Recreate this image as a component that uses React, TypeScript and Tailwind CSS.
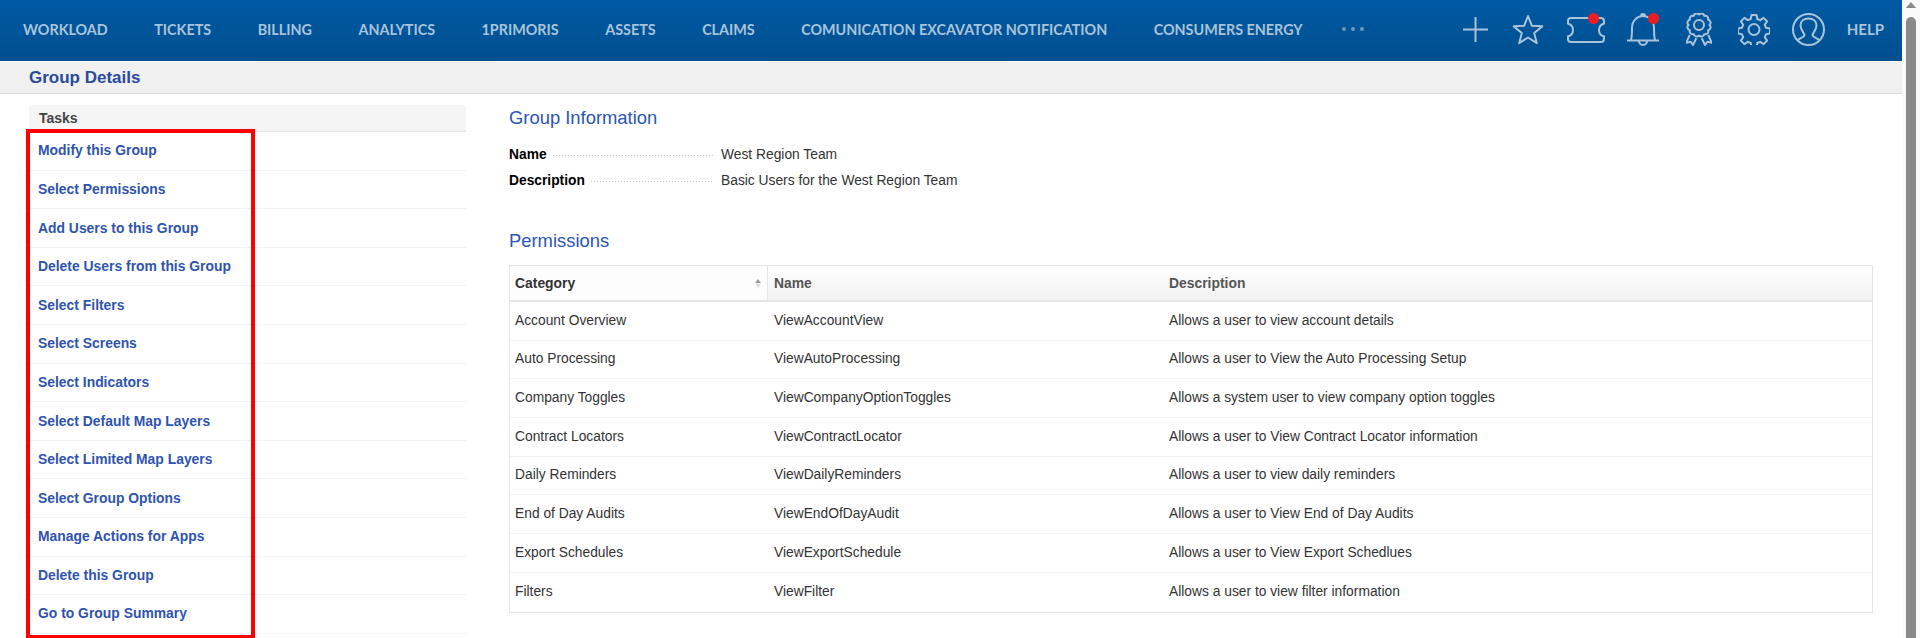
const navItems = [
  "WORKLOAD",
  "TICKETS",
  "BILLING",
  "ANALYTICS",
  "1PRIMORIS",
  "ASSETS",
  "CLAIMS",
  "COMUNICATION EXCAVATOR NOTIFICATION",
  "CONSUMERS ENERGY",
]

const tasks = [
  "Modify this Group",
  "Select Permissions",
  "Add Users to this Group",
  "Delete Users from this Group",
  "Select Filters",
  "Select Screens",
  "Select Indicators",
  "Select Default Map Layers",
  "Select Limited Map Layers",
  "Select Group Options",
  "Manage Actions for Apps",
  "Delete this Group",
  "Go to Group Summary",
]

const permissions = [
  ["Account Overview", "ViewAccountView", "Allows a user to view account details"],
  ["Auto Processing", "ViewAutoProcessing", "Allows a user to View the Auto Processing Setup"],
  ["Company Toggles", "ViewCompanyOptionToggles", "Allows a system user to view company option toggles"],
  ["Contract Locators", "ViewContractLocator", "Allows a user to View Contract Locator information"],
  ["Daily Reminders", "ViewDailyReminders", "Allows a user to view daily reminders"],
  ["End of Day Audits", "ViewEndOfDayAudit", "Allows a user to View End of Day Audits"],
  ["Export Schedules", "ViewExportSchedule", "Allows a user to View Export Schedlues"],
  ["Filters", "ViewFilter", "Allows a user to view filter information"],
]

function HeaderIcons() {
  return (
    <div className="flex items-center text-[#a9c3da]">
      {/* plus */}
      <svg width="25" height="25" viewBox="0 0 25 25" fill="none" stroke="currentColor" strokeWidth="2">
        <path d="M12.500 0v25M0 12.500h25" />
      </svg>
      {/* star */}
      <svg width="32" height="31" viewBox="0 0 32 31" fill="none" stroke="currentColor" strokeWidth="2" strokeLinejoin="round" className="ml-[24px]">
        <path d="M16 2l3.820 9.740 10.450.62-8.090 6.650 2.640 10.130L16 23.500l-8.820 5.640 2.640-10.130-8.090-6.650 10.450-.62z" />
      </svg>
      {/* ticket */}
      <div className="relative ml-[23px]">
        <svg width="38" height="26" viewBox="0 0 38 26" fill="none" stroke="currentColor" strokeWidth="2" className="block">
          <path d="M4 1h30a3 3 0 0 1 3 3v2.500c-3 1-5 3.500-5 6.500s2 5.500 5 6.500V22a3 3 0 0 1-3 3H4a3 3 0 0 1-3-3v-2.500c3-1 5-3.500 5-6.500s-2-5.500-5-6.500V4a3 3 0 0 1 3-3z" />
        </svg>
        <span className="absolute right-[6px] top-[-4px] size-[11px] rounded-full bg-[#ed1c24]" />
      </div>
      {/* bell */}
      <div className="relative ml-[22px]">
        <svg width="32" height="33" viewBox="0 0 32 33" fill="none" stroke="currentColor" strokeWidth="2" className="block">
          <path d="M4 27c1-3 1-7 1-12C5 8 10 3 16 3s11 5 11 12c0 5 0 9 1 12M0 27.500h32M12 28a4 4 0 0 0 8 0M14 3a2 2 0 0 1 4 0" />
        </svg>
        <span className="absolute right-0 top-0 size-[11px] rounded-full bg-[#ed1c24]" />
      </div>
      {/* award */}
      <svg width="26" height="33" viewBox="0 0 26 33" fill="none" stroke="currentColor" strokeWidth="2" strokeLinejoin="round" className="ml-[27px]">
        <path d="M23.500 12a3 3 0 0 1-1.410 5.250 3 3 0 0 1-3.840 3.840A3 3 0 0 1 13 22.500a3 3 0 0 1-5.250-1.410 3 3 0 0 1-3.840-3.840A3 3 0 0 1 2.500 12a3 3 0 0 1 1.410-5.250 3 3 0 0 1 3.840-3.840A3 3 0 0 1 13 1.500a3 3 0 0 1 5.250 1.410 3 3 0 0 1 3.840 3.840A3 3 0 0 1 23.500 12z" />
        <circle cx="13" cy="12" r="5" />
        <path d="M3.700 22L.3 29.700l4.400-1L7 32l3.300-6.700M22.300 22l3.400 7.700-4.400-1L19 32l-3.300-6.700" />
      </svg>
      {/* gear */}
      <svg width="32" height="31" viewBox="0 0.500 32 31" fill="none" stroke="currentColor" strokeWidth="2" strokeLinejoin="round" className="ml-[26px]">
        <path d="M13.500 1.500h5l.8 4 2.900 1.200 3.400-2.300 3.500 3.500-2.300 3.400 1.200 2.900 4 .8v5l-4 .8-1.200 2.900 2.300 3.400-3.500 3.500-3.400-2.300-2.900 1.200-.8 4h-5l-.8-4-2.900-1.200-3.400 2.300-3.500-3.500 2.300-3.400-1.200-2.900-4-.8v-5l4-.8 1.200-2.900-2.300-3.400 3.500-3.500 3.400 2.300 2.900-1.200z" />
        <circle cx="16" cy="16" r="5.500" />
      </svg>
      {/* user */}
      <svg width="33" height="33" viewBox="0 0 33 33" fill="none" stroke="currentColor" strokeWidth="2" className="ml-[22px]">
        <circle cx="16.500" cy="16.500" r="15.500" />
        <path d="M5.500 27.500C7 25 12 25 12.500 22c0-1.500-4-5-4-9.500C8.500 8 12 5.500 16.500 5.500s8 2.500 8 7c0 4.500-4 8-4 9.500.5 3 5.500 3 7 5.500" />
      </svg>
      <span className="ml-[22px] font-['Lato',sans-serif] text-[15px] font-bold">HELP</span>
    </div>
  )
}

function Leader() {
  return <span className="ml-[6px] mr-[8px] h-px flex-1 bg-[repeating-linear-gradient(90deg,#c8c8c8_0,#c8c8c8_1px,transparent_1px,transparent_3px)]" />
}

export default function App() {
  return (
    <div className="flex h-[638px] overflow-hidden bg-white font-['Liberation_Sans',sans-serif]">
      <div className="min-w-0 flex-1">
        {/* Top nav */}
        <header className="flex h-[61px] items-center justify-between bg-gradient-to-b from-[#005aa3] to-[#004f8f] pb-[2px] pl-[23px] pr-[18px]">
          <nav className="flex items-center gap-[46.500px] font-['Lato',sans-serif] text-[14.350px] font-bold text-[#a9c3da]">
            {navItems.map((item) => (
              <span key={item} className="whitespace-nowrap">{item}</span>
            ))}
            <span className="-ml-[7px] flex gap-[5px]">
              <span className="size-[4px] rounded-full bg-[#6f97bc]" />
              <span className="size-[4px] rounded-full bg-[#6f97bc]" />
              <span className="size-[4px] rounded-full bg-[#6f97bc]" />
            </span>
          </nav>
          <HeaderIcons />
        </header>

        {/* Page title */}
        <div className="mt-px flex h-[32px] items-center border-b border-[#dcdcdc] bg-[#f0f0f0] pl-[29px] text-[17px] font-bold text-[#2b4a9e]">
          Group Details
        </div>

        <div className="flex pl-[29px] pr-[29px] pt-[11px]">
          {/* Tasks */}
          <aside className="relative w-[437px] shrink-0">
            <div className="flex h-[27px] items-center rounded-t-[3px] border-b border-[#e6e6e6] bg-[#f5f5f5] pl-[10px] text-[14px] font-bold text-[#444]">
              Tasks
            </div>
            {tasks.map((task) => (
              <div key={task} className="flex h-[38.600px] items-center border-b border-[#f3f3f3] pl-[9px] text-[13.900px] font-bold text-[#2f54ae]">
                {task}
              </div>
            ))}
            <div className="absolute left-[-3px] top-[24px] h-[510px] w-[229px] border-4 border-[#ff0000]" />
          </aside>

          {/* Details */}
          <main className="ml-[43px] min-w-0 flex-1">
            <h2 className="text-[18.400px] leading-[26px] text-[#2a56b4]">Group Information</h2>
            <dl className="mt-[11px] text-[13.800px] text-[#333]">
              <div className="flex h-[26px] items-center">
                <dt className="flex w-[212px] items-center font-bold text-black">
                  Name
                  <Leader />
                </dt>
                <dd>West Region Team</dd>
              </div>
              <div className="flex h-[26px] items-center">
                <dt className="flex w-[212px] items-center font-bold text-black">
                  Description
                  <Leader />
                </dt>
                <dd>Basic Users for the West Region Team</dd>
              </div>
            </dl>
            <h2 className="mt-[34px] text-[18.400px] leading-[26px] text-[#2a56b4]">Permissions</h2>

            <div className="mt-[11px] border border-[#e6e6e6]">
              <div className="flex h-[36px] border-b-2 border-[#e6e6e6] bg-gradient-to-b from-white to-[#f2f2f2] text-[13.900px] font-bold text-[#555]">
                <div className="flex w-[258px] items-center justify-between border-r border-[#e6e6e6] bg-[#fdfdfd] pl-[5px] pr-[6px] text-[#333]">
                  Category
                  <span className="flex flex-col gap-px">
                    <span className="size-0 border-x-[3px] border-b-[4px] border-x-transparent border-b-[#999]" />
                    <span className="size-0 border-x-[3px] border-t-[4px] border-x-transparent border-t-[#ddd]" />
                  </span>
                </div>
                <div className="flex w-[395px] items-center pl-[6px]">Name</div>
                <div className="flex items-center pl-[6px]">Description</div>
              </div>
              {permissions.map(([category, name, description]) => (
                <div key={name} className="flex h-[38.700px] items-center border-b border-[#f3f3f3] text-[13.800px] text-[#333] last:border-b-0">
                  <div className="w-[258px] pl-[5px]">{category}</div>
                  <div className="w-[395px] pl-[6px]">{name}</div>
                  <div className="pl-[6px]">{description}</div>
                </div>
              ))}
            </div>
          </main>
        </div>
      </div>

      {/* Scrollbar */}
      <div className="flex w-[18px] shrink-0 flex-col items-center bg-[#fafafa]">
        <span className="mt-[2px] size-0 border-x-[5px] border-b-[6px] border-x-transparent border-b-[#8a8a8a]" />
        <div className="mt-[9px] w-[10px] flex-1 rounded-t-[5px] bg-[#8a8a8a]" />
      </div>
    </div>
  )
}
